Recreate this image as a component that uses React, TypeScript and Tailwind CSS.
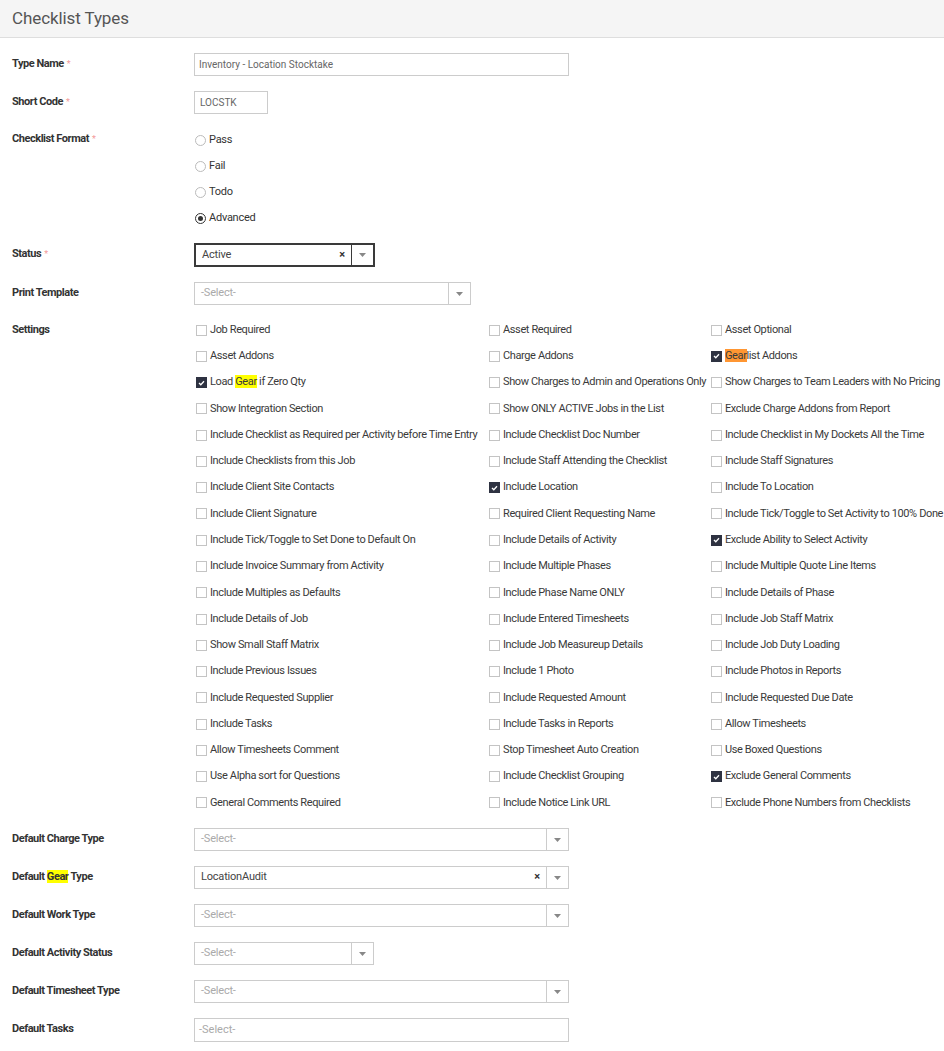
import React from "react";

const FONT = { fontFamily: "Roboto, 'Liberation Sans', sans-serif" };

type Item = { label: React.ReactNode; checked?: boolean };

const Hl = ({ children, active }: { children: React.ReactNode; active?: boolean }) => (
  <span className={active ? "bg-[#ff9632]" : "bg-[#ffff00]"}>{children}</span>
);

const SETTINGS: Item[][] = [
  [{ label: "Job Required" }, { label: "Asset Required" }, { label: "Asset Optional" }],
  [{ label: "Asset Addons" }, { label: "Charge Addons" }, { label: <><Hl active>Gear</Hl>list Addons</>, checked: true }],
  [{ label: <>Load <Hl>Gear</Hl> if Zero Qty</>, checked: true }, { label: "Show Charges to Admin and Operations Only" }, { label: "Show Charges to Team Leaders with No Pricing" }],
  [{ label: "Show Integration Section" }, { label: "Show ONLY ACTIVE Jobs in the List" }, { label: "Exclude Charge Addons from Report" }],
  [{ label: "Include Checklist as Required per Activity before Time Entry" }, { label: "Include Checklist Doc Number" }, { label: "Include Checklist in My Dockets All the Time" }],
  [{ label: "Include Checklists from this Job" }, { label: "Include Staff Attending the Checklist" }, { label: "Include Staff Signatures" }],
  [{ label: "Include Client Site Contacts" }, { label: "Include Location", checked: true }, { label: "Include To Location" }],
  [{ label: "Include Client Signature" }, { label: "Required Client Requesting Name" }, { label: "Include Tick/Toggle to Set Activity to 100% Done" }],
  [{ label: "Include Tick/Toggle to Set Done to Default On" }, { label: "Include Details of Activity" }, { label: "Exclude Ability to Select Activity", checked: true }],
  [{ label: "Include Invoice Summary from Activity" }, { label: "Include Multiple Phases" }, { label: "Include Multiple Quote Line Items" }],
  [{ label: "Include Multiples as Defaults" }, { label: "Include Phase Name ONLY" }, { label: "Include Details of Phase" }],
  [{ label: "Include Details of Job" }, { label: "Include Entered Timesheets" }, { label: "Include Job Staff Matrix" }],
  [{ label: "Show Small Staff Matrix" }, { label: "Include Job Measureup Details" }, { label: "Include Job Duty Loading" }],
  [{ label: "Include Previous Issues" }, { label: "Include 1 Photo" }, { label: "Include Photos in Reports" }],
  [{ label: "Include Requested Supplier" }, { label: "Include Requested Amount" }, { label: "Include Requested Due Date" }],
  [{ label: "Include Tasks" }, { label: "Include Tasks in Reports" }, { label: "Allow Timesheets" }],
  [{ label: "Allow Timesheets Comment" }, { label: "Stop Timesheet Auto Creation" }, { label: "Use Boxed Questions" }],
  [{ label: "Use Alpha sort for Questions" }, { label: "Include Checklist Grouping" }, { label: "Exclude General Comments", checked: true }],
  [{ label: "General Comments Required" }, { label: "Include Notice Link URL" }, { label: "Exclude Phone Numbers from Checklists" }],
];

function Label({ children, required }: { children: React.ReactNode; required?: boolean }) {
  return (
    <div className="text-[11px] font-bold text-[#333] leading-[14px] tracking-[-0.45px]">
      {children}
      {required && <span className="ml-[3px] align-top text-[9px] text-[#f39a9a] font-normal">*</span>}
    </div>
  );
}

function Row({ label, required, children, labelPad = "pt-[4px]" }: { label: React.ReactNode; required?: boolean; children: React.ReactNode; labelPad?: string }) {
  return (
    <div className="grid grid-cols-[182px_1fr]">
      <div className={labelPad}>
        <Label required={required}>{label}</Label>
      </div>
      <div>{children}</div>
    </div>
  );
}

function Caret() {
  return (
    <svg width="7" height="4" viewBox="0 0 7 4" className="block">
      <path d="M0 0h7L3.5 4z" fill="#888" />
    </svg>
  );
}

function Select({ value, width, clear, active }: { value?: string; width: string; clear?: boolean; active?: boolean }) {
  return (
    <div
      className={`flex items-stretch bg-white ${width} ${
        active ? "h-[24px] border-2 border-[#3a3a3a]" : "h-[23px] border border-[#ccc]"
      }`}
    >
      <div className={`flex-1 flex items-center pl-[6px] text-[11px] tracking-[-0.2px] ${value ? "text-[#444]" : "text-[#aaa]"}`}>
        {value ?? "-Select-"}
      </div>
      {clear && (
        <div className="flex items-center pr-[6px] text-[11px] font-bold text-[#333]">×</div>
      )}
      <div className={`w-[22px] flex items-center justify-center border-l ${active ? "border-[#3a3a3a]" : "border-[#ccc]"}`}>
        <Caret />
      </div>
    </div>
  );
}

function Radio({ label, checked }: { label: string; checked?: boolean }) {
  return (
    <div className="flex items-center h-[20px] gap-[3px] text-[11px] text-[#333] tracking-[-0.25px]">
      <span
        className={`ml-[1px] w-[11px] h-[11px] rounded-full border flex items-center justify-center ${
          checked ? "border-[#333]" : "border-[#bbb]"
        }`}
      >
        {checked && <span className="w-[5px] h-[5px] rounded-full bg-[#333]" />}
      </span>
      {label}
    </div>
  );
}

function Check({ item }: { item: Item }) {
  return (
    <div className="flex items-center h-full gap-[3px] whitespace-nowrap text-[11px] text-[#3a3a3a] tracking-[-0.38px]">
      <span
        className={`ml-[2px] w-[11px] h-[11px] shrink-0 flex items-center justify-center ${
          item.checked ? "bg-[#2e3241]" : "border border-[#c4c4c4] bg-white"
        }`}
      >
        {item.checked && (
          <svg width="7" height="6" viewBox="0 0 7 6">
            <path d="M1 3l1.8 1.8L6 1.3" fill="none" stroke="#fff" strokeWidth="1.3" />
          </svg>
        )}
      </span>
      <span>{item.label}</span>
    </div>
  );
}

export default function App() {
  return (
    <div className="w-[944px] min-h-[1051px] bg-white" style={FONT}>
      <div className="h-[38px] bg-[#f5f5f5] border-b border-[#dedede] flex items-center px-3">
        <h1 className="text-[17px] text-[#555] font-normal tracking-[-0.1px]">Checklist Types</h1>
      </div>

      <div className="px-3 pt-[15px] flex flex-col">
        <Row label="Type Name" required>
          <div className="w-[375px] h-[23px] border border-[#ccc] flex items-center px-[4px] text-[10px] text-[#666]">
            Inventory - Location Stocktake
          </div>
        </Row>

        <div className="mt-[15px]">
          <Row label="Short Code" required>
            <div className="w-[74px] h-[23px] border border-[#ccc] flex items-center px-[5px] text-[10px] text-[#666]">
              LOCSTK
            </div>
          </Row>
        </div>

        <div className="mt-[16px]">
          <Row label="Checklist Format" required labelPad="pt-[2px]">
            <div className="flex flex-col gap-[6px]">
              <Radio label="Pass" />
              <Radio label="Fail" />
              <Radio label="Todo" />
              <Radio label="Advanced" checked />
            </div>
          </Row>
        </div>

        <div className="mt-[15px]">
          <Row label="Status" required>
            <Select value="Active" width="w-[181px]" clear active />
          </Row>
        </div>

        <div className="mt-[15px]">
          <Row label="Print Template">
            <Select width="w-[277px]" />
          </Row>
        </div>

        <div className="mt-[12px]">
          <Row label="Settings" labelPad="pt-[6px]">
            <div className="grid grid-cols-[293px_222px_1fr] auto-rows-[26.28px]">
              {SETTINGS.flat().map((item, i) => (
                <Check key={i} item={item} />
              ))}
            </div>
          </Row>
        </div>

        <div className="mt-[12px] flex flex-col gap-[15px] pb-[9px]">
          <Row label="Default Charge Type">
            <Select width="w-[375px]" />
          </Row>
          <Row label={<>Default <Hl>Gear</Hl> Type</>}>
            <Select value="LocationAudit" width="w-[375px]" clear />
          </Row>
          <Row label="Default Work Type">
            <Select width="w-[375px]" />
          </Row>
          <Row label="Default Activity Status">
            <Select width="w-[180px]" />
          </Row>
          <Row label="Default Timesheet Type">
            <Select width="w-[375px]" />
          </Row>
          <Row label="Default Tasks">
            <div className="w-[375px] h-[24px] border border-[#ccc] flex items-center pl-[4px] text-[11px] text-[#aaa]">
              -Select-
            </div>
          </Row>
        </div>
      </div>
    </div>
  );
}
